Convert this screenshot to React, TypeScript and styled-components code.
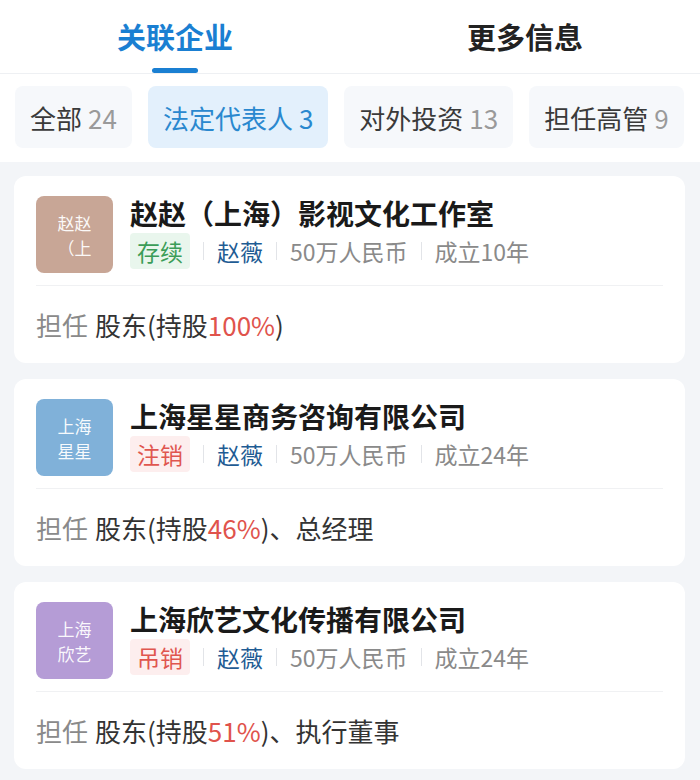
import styled, { createGlobalStyle } from "styled-components";

const GlobalStyle = createGlobalStyle`
  body {
    margin: 0;
    background: #f3f5f8;
    font-family: "Noto Sans CJK SC", "Noto Sans", sans-serif;
  }
`;

const Page = styled.div`
  width: 700px;
  min-height: 780px;
  background: #f3f5f8;
`;

const TabBar = styled.div`
  display: flex;
  height: 73px;
  background: #fff;
  border-bottom: 1px solid #eef0f3;
`;

const Tab = styled.div<{ $active?: boolean }>`
  flex: 1;
  position: relative;
  display: flex;
  justify-content: center;
  align-items: center;
  padding-bottom: 2px;
  font-size: 29px;
  font-weight: 700;
  color: ${(p) => (p.$active ? "#1a7fd2" : "#222")};
`;

const Underline = styled.span`
  position: absolute;
  bottom: 0;
  left: 50%;
  width: 46px;
  height: 5px;
  margin-left: -23px;
  border-radius: 3px;
  background: #1a7fd2;
`;

const FilterRow = styled.div`
  display: flex;
  gap: 16px;
  padding: 12px 0 14px 15px;
  background: #fff;
  overflow: hidden;
  white-space: nowrap;
`;

const Chip = styled.div<{ $active?: boolean }>`
  flex-shrink: 0;
  display: flex;
  align-items: center;
  height: 62px;
  padding: 0 15px;
  border-radius: 8px;
  font-size: 26px;
  background: ${(p) => (p.$active ? "#e3f0fc" : "#f6f8fb")};
  color: ${(p) => (p.$active ? "#2a88cf" : "#3a3a3a")};
`;

const ChipNum = styled.span<{ $active?: boolean }>`
  margin-left: 6px;
  color: ${(p) => (p.$active ? "#2a88cf" : "#9a9a9a")};
`;

const List = styled.div`
  display: flex;
  flex-direction: column;
  gap: 16px;
  padding: 14px 15px 10px 14px;
`;

const Card = styled.div`
  background: #fff;
  border-radius: 12px;
  padding: 20px 22px 0;
`;

const Top = styled.div`
  display: flex;
  gap: 17px;
  padding-bottom: 12px;
  border-bottom: 1px solid #f0f1f3;
`;

const Logo = styled.div<{ $bg: string }>`
  width: 77px;
  height: 77px;
  flex-shrink: 0;
  border-radius: 8px;
  background: ${(p) => p.$bg};
  color: rgba(255, 255, 255, 0.95);
  font-size: 17px;
  display: flex;
  flex-direction: column;
  justify-content: center;
  align-items: center;
`;

const LogoLine = styled.span`
  display: block;
  line-height: 25px;
`;

const Info = styled.div`
  display: flex;
  flex-direction: column;
  justify-content: space-between;
  padding: 0 0 4px;
`;

const Title = styled.div`
  font-size: 28px;
  font-weight: 600;
  color: #1a1a1a;
  line-height: 34px;
`;

const Meta = styled.div`
  display: flex;
  align-items: center;
  font-size: 23px;
  color: #8a8a8a;
`;

const Status = styled.span<{ $ok?: boolean }>`
  padding: 1px 7px;
  border-radius: 4px;
  background: ${(p) => (p.$ok ? "#e9f6ed" : "#fdeeee")};
  color: ${(p) => (p.$ok ? "#3b9d58" : "#e0564f")};
`;

const Sep = styled.span`
  width: 1px;
  height: 18px;
  margin: 0 13px;
  background: #e2e4e8;
`;

const Person = styled.span`
  color: #1f5c94;
`;

const Role = styled.div`
  font-size: 26px;
  color: #333;
  padding: 23px 0 22px;
  line-height: 32px;
`;

const Muted = styled.span`
  color: #8a8a8a;
  margin-right: 7px;
`;

const Pct = styled.span`
  color: #e0534c;
`;

const companies = [
  {
    logo: ["赵赵", "（上"],
    bg: "#c8a696",
    name: "赵赵（上海）影视文化工作室",
    status: "存续",
    ok: true,
    capital: "50万人民币",
    age: "成立10年",
    pct: "100%",
    extra: "",
  },
  {
    logo: ["上海", "星星"],
    bg: "#80b1d9",
    name: "上海星星商务咨询有限公司",
    status: "注销",
    ok: false,
    capital: "50万人民币",
    age: "成立24年",
    pct: "46%",
    extra: "、总经理",
  },
  {
    logo: ["上海", "欣艺"],
    bg: "#b59cd6",
    name: "上海欣艺文化传播有限公司",
    status: "吊销",
    ok: false,
    capital: "50万人民币",
    age: "成立24年",
    pct: "51%",
    extra: "、执行董事",
  },
];

const filters = [
  { label: "全部", num: 24 },
  { label: "法定代表人", num: 3, active: true },
  { label: "对外投资", num: 13 },
  { label: "担任高管", num: 9 },
];

export default function App() {
  return (
    <Page>
      <GlobalStyle />
      <TabBar>
        <Tab $active>
          关联企业
          <Underline />
        </Tab>
        <Tab>更多信息</Tab>
      </TabBar>
      <FilterRow>
        {filters.map((f) => (
          <Chip key={f.label} $active={f.active}>
            {f.label}
            <ChipNum $active={f.active}>{f.num}</ChipNum>
          </Chip>
        ))}
      </FilterRow>
      <List>
        {companies.map((c) => (
          <Card key={c.name}>
            <Top>
              <Logo $bg={c.bg}>
                <LogoLine>{c.logo[0]}</LogoLine>
                <LogoLine>{c.logo[1]}</LogoLine>
              </Logo>
              <Info>
                <Title>{c.name}</Title>
                <Meta>
                  <Status $ok={c.ok}>{c.status}</Status>
                  <Sep />
                  <Person>赵薇</Person>
                  <Sep />
                  {c.capital}
                  <Sep />
                  {c.age}
                </Meta>
              </Info>
            </Top>
            <Role>
              <Muted>担任</Muted>
              股东(持股<Pct>{c.pct}</Pct>){c.extra}
            </Role>
          </Card>
        ))}
      </List>
    </Page>
  );
}
